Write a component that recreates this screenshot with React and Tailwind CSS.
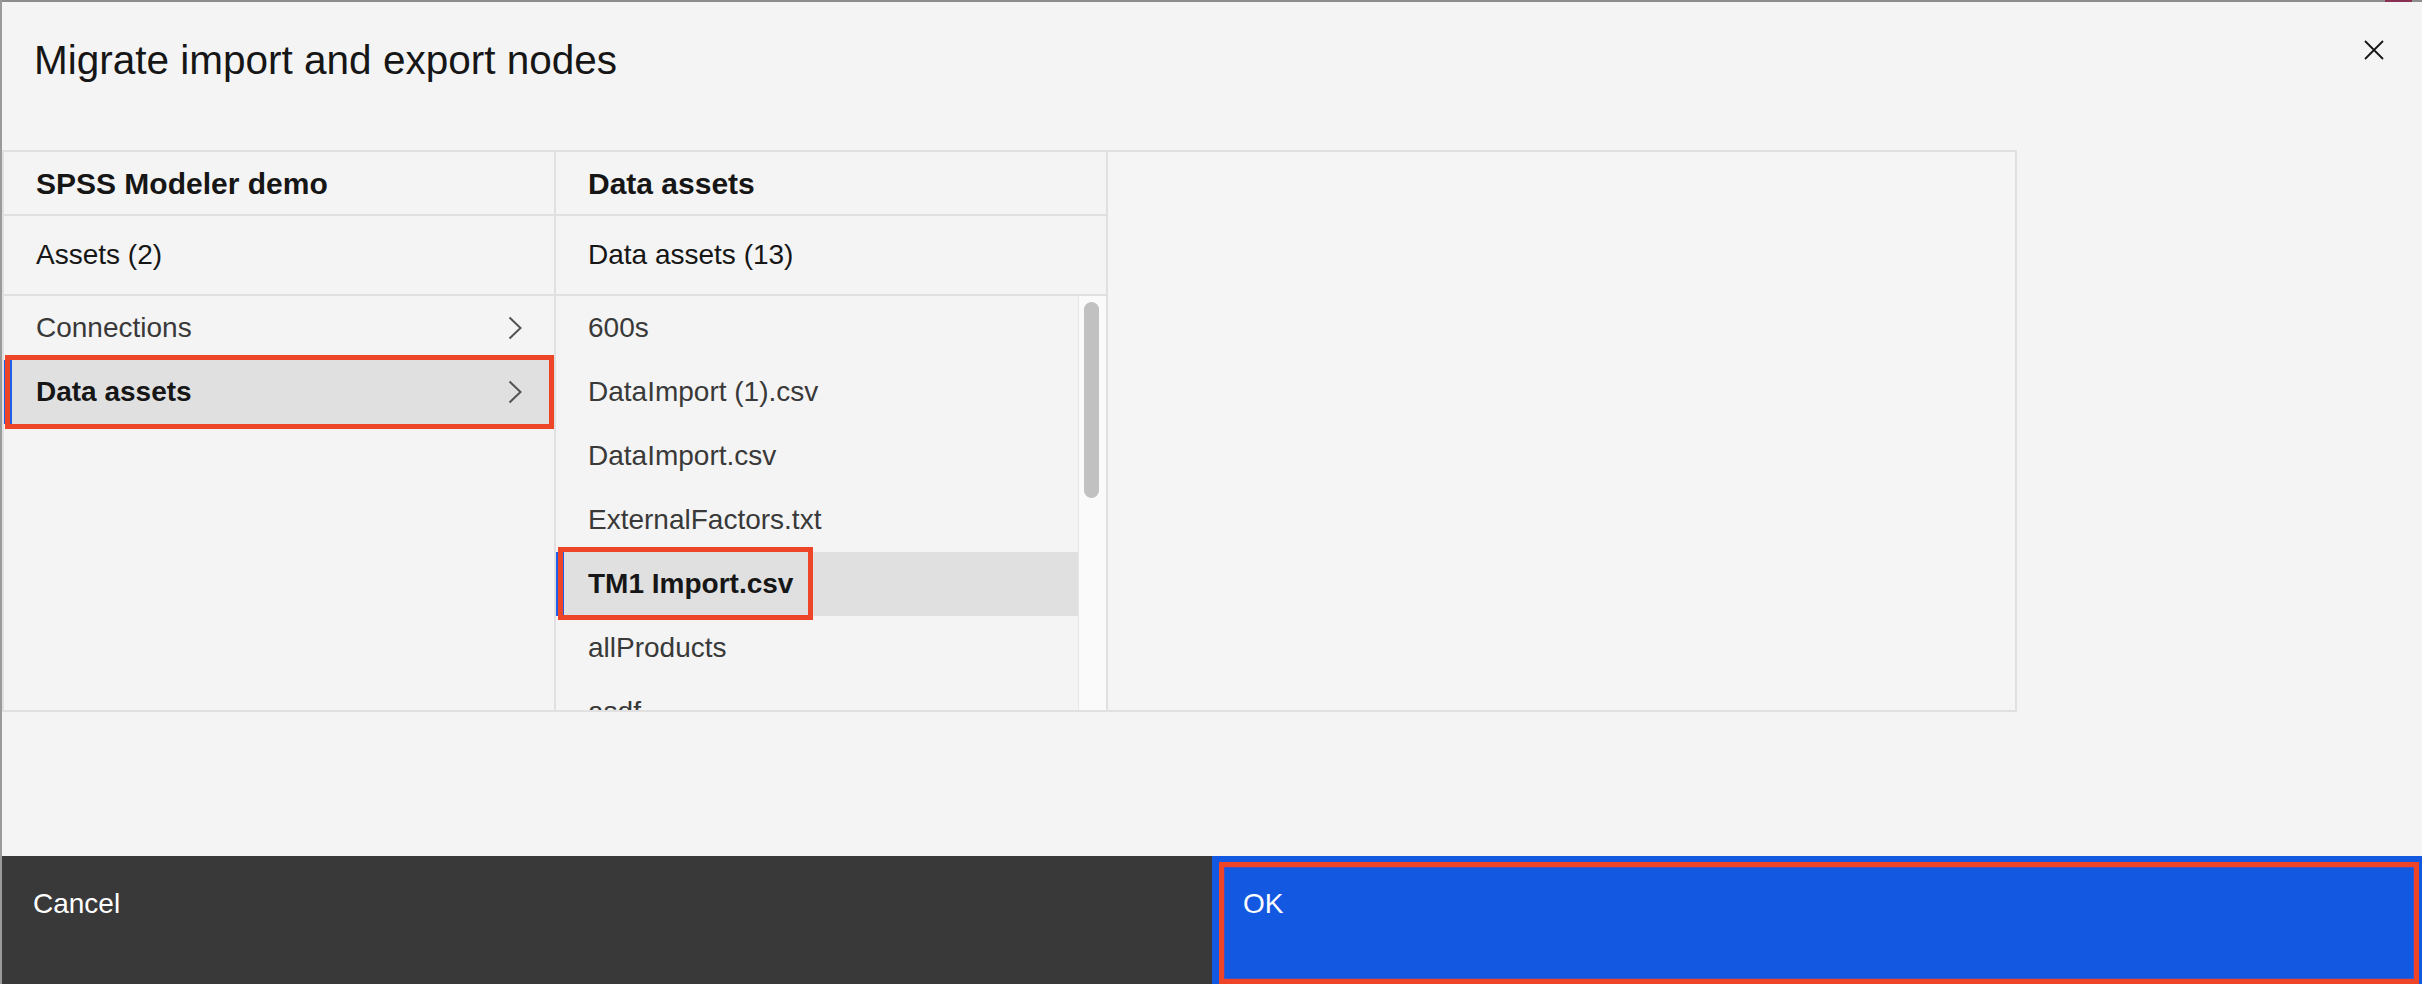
import React from "react";

const leftItems = [
  { name: "Connections", selected: false },
  { name: "Data assets", selected: true },
];

const assets = [
  "600s",
  "DataImport (1).csv",
  "DataImport.csv",
  "ExternalFactors.txt",
  "TM1 Import.csv",
  "allProducts",
  "asdf",
];

function Chevron() {
  return (
    <svg width="14" height="24" viewBox="0 0 14 24" fill="none" className="shrink-0">
      <path d="M1.5 1.5 L12.5 12 L1.5 22.5" stroke="#525252" strokeWidth="2" />
    </svg>
  );
}

function Column({ title, subtitle, children }) {
  return (
    <div className="flex w-[552px] shrink-0 flex-col border-r-2 border-[#e0e0e0]">
      <div className="flex h-[64px] shrink-0 items-center border-b-2 border-[#e0e0e0] pl-[32px] text-[30px] font-bold text-[#161616]">
        {title}
      </div>
      <div className="flex h-[80px] shrink-0 items-center border-b-2 border-[#e0e0e0] pl-[32px] text-[28px] text-[#161616]">
        {subtitle}
      </div>
      <div className="flex min-h-0 flex-1">{children}</div>
    </div>
  );
}

export default function App() {
  return (
    <div className="flex h-[984px] w-[2422px] flex-col overflow-hidden border-l-2 border-[#9a9a9a] bg-[#f4f4f4] font-['Liberation_Sans',Arial,sans-serif]">
      <div className="flex h-[2px] shrink-0">
        <div className="flex-1 bg-[#8d8d8d]" />
        <div className="w-[27px] bg-[#8a3052]" />
        <div className="w-[10px] bg-[#8d8d8d]" />
      </div>

      <header className="flex shrink-0 items-start justify-between pl-[32px] pr-[38px] pt-[34px]">
        <h1 className="text-[40.5px] leading-[48px] text-[#161616]">
          Migrate import and export nodes
        </h1>
        <svg width="20" height="20" viewBox="0 0 20 20" className="mt-[4px]">
          <path d="M1 1 L19 19 M19 1 L1 19" stroke="#161616" strokeWidth="1.8" />
        </svg>
      </header>

      <main className="mt-[66px] flex h-[562px] w-[2015px] shrink-0 border-2 border-[#e0e0e0]">
        <Column title="SPSS Modeler demo" subtitle="Assets (2)">
          <div className="flex w-full flex-col">
            {leftItems.map((item) => (
              <div
                key={item.name}
                className={
                  item.selected
                    ? "relative flex h-[64px] items-center justify-between bg-[#e0e0e0] pl-[32px] pr-[32px] text-[28px] font-bold text-[#161616] shadow-[inset_8px_0_0_#1f5ee8]"
                    : "flex h-[64px] items-center justify-between pl-[32px] pr-[32px] text-[28px] text-[#393939]"
                }
              >
                <span>{item.name}</span>
                <Chevron />
                {item.selected && (
                  <div className="absolute -top-[5px] -bottom-[5px] left-[1px] right-0 border-[5px] border-[#ee4428]" />
                )}
              </div>
            ))}
          </div>
        </Column>

        <Column title="Data assets" subtitle="Data assets (13)">
          <div className="flex min-w-0 flex-1 flex-col overflow-hidden">
            {assets.map((name) =>
              name === "TM1 Import.csv" ? (
                <div
                  key={name}
                  className="relative flex h-[64px] shrink-0 items-center bg-[#e0e0e0] pl-[32px] text-[28px] font-bold text-[#161616] shadow-[inset_8px_0_0_#1f5ee8]"
                >
                  {name}
                  <div className="absolute -top-[5px] left-[2px] h-[73px] w-[255px] border-[5px] border-[#ee4428]" />
                </div>
              ) : (
                <div
                  key={name}
                  className="flex h-[64px] shrink-0 items-center pl-[32px] text-[28px] text-[#393939]"
                >
                  {name}
                </div>
              )
            )}
          </div>
          <div className="w-[28px] shrink-0 border-l border-[#e6e6e6] bg-[#fafafa] pl-[5px] pt-[6px]">
            <div className="h-[196px] w-[15px] rounded-full bg-[#c1c1c1]" />
          </div>
        </Column>

        <div className="flex-1 bg-[#f5f5f5]" />
      </main>

      <div className="flex-1" />

      <footer className="flex h-[128px] shrink-0 text-[28px] leading-[32px] text-white">
        <button className="flex flex-1 items-start bg-[#393939] pl-[31px] pt-[32px] text-left">
          <span>Cancel</span>
        </button>
        <button className="relative flex flex-1 items-start bg-[#1358e0] pl-[31px] pt-[32px] text-left">
          <span>OK</span>
          <div className="absolute bottom-0 left-[7px] right-[3px] top-[6px] border-[5px] border-[#ee4428] shadow-[inset_0_0_0_1px_#4352c0]" />
        </button>
      </footer>
    </div>
  );
}
